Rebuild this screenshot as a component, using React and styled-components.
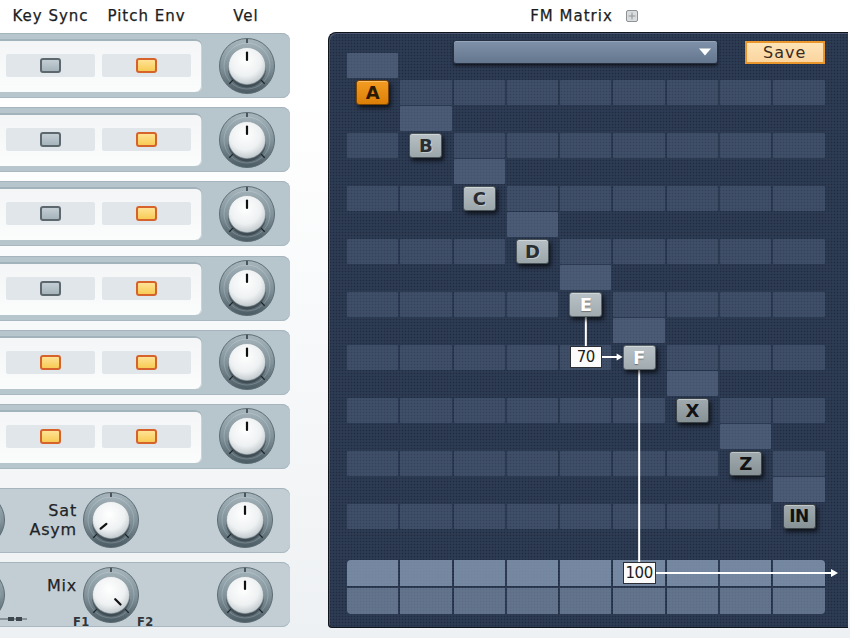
import React from "react";
import styled, { createGlobalStyle, css } from "styled-components";

const GlobalStyle = createGlobalStyle`
  html, body { margin: 0; padding: 0; }
  body {
    width: 850px;
    height: 638px;
    overflow: hidden;
    background: #f1f4f6;
    font-family: "DejaVu Sans", "Liberation Sans", sans-serif;
  }
`;

// matrix geometry (px)
const COL_W = 51.3;
const COL_GAP = 2;
const ROW_H = 25;
const ROW_GAP = 1.5;
const PITCH_X = COL_W + COL_GAP;
const PITCH_Y = ROW_H + ROW_GAP;
const PAD_X = 18;
const PAD_Y = 20;
const OUT_GAP = 31.5;
const OUT_TOP = PAD_Y + 17 * PITCH_Y + ROW_H + OUT_GAP;

const operators = [
  { label: "A", tone: "active" },
  { label: "B", tone: "light" },
  { label: "C", tone: "light" },
  { label: "D", tone: "light" },
  { label: "E", tone: "pale" },
  { label: "F", tone: "pale" },
  { label: "X", tone: "dark" },
  { label: "Z", tone: "dark" },
  { label: "IN", tone: "dark" },
];

const voices = [
  { sync: false, pitch: true },
  { sync: false, pitch: true },
  { sync: false, pitch: true },
  { sync: false, pitch: true },
  { sync: true, pitch: true },
  { sync: true, pitch: true },
];

const Page = styled.div`
  width: 850px;
  height: 638px;
  overflow: hidden;
  background: linear-gradient(#ffffff 0, #ffffff 90px, #eef1f3 100%);
`;

const Header = styled.div`
  height: 32px;
  display: flex;
  align-items: center;
  background: #fff;
`;

const LeftHeader = styled.div`
  width: 290px;
  display: flex;
  padding-left: 6px;
  box-sizing: border-box;
`;

const HeadLabel = styled.div`
  width: ${(p) => p.$w}px;
  margin-left: ${(p) => p.$ml || 0}px;
  text-align: center;
  font-size: 15px;
  letter-spacing: 1px;
  color: #1a1e22;
  white-space: nowrap;
  -webkit-text-stroke: 0.25px #1a1e22;
`;

const MatrixHeader = styled.div`
  margin-left: 38px;
  width: 520px;
  display: flex;
  justify-content: center;
  align-items: center;
  gap: 13px;
  padding-right: 8px;
  box-sizing: border-box;
`;

const Body = styled.div`
  display: flex;
  align-items: flex-start;
`;

const LeftColumn = styled.div`
  width: 290px;
  padding-top: 1px;
  display: flex;
  flex-direction: column;
  gap: 9.2px;
`;

const RowShell = styled.div`
  position: relative;
  margin-left: -10px;
  width: 300px;
  height: 65px;
  display: flex;
  align-items: center;
  border-radius: 0 8px 8px 0;
  background: ${(p) => (p.$plain ? "#c3ced4" : "#b7c5cd")};
  box-shadow: inset 0 1px 0 #a6b5bd, inset 0 -1px 0 #a9b8c0;
  ${(p) => p.$spaced && css`margin-top: 9.8px;`}
`;

const InnerPanel = styled.div`
  width: 212px;
  height: 53px;
  box-sizing: border-box;
  padding-left: 16px;
  display: flex;
  align-items: center;
  gap: 7px;
  background: linear-gradient(#f3f5f6, #fbfcfc);
  border-radius: 0 6px 6px 0;
  box-shadow: inset 0 2px 0 #a3b3bb, inset -1px 0 0 #c9d3d8;
`;

const SwitchCell = styled.div`
  width: 89px;
  height: 23px;
  border-radius: 2px;
  background: #e0e6e9;
  display: flex;
  align-items: center;
  justify-content: center;
`;

const Led = styled.div`
  width: 17px;
  height: 11px;
  border-radius: 3px;
  border: 2px solid ${(p) => (p.$on ? "#d6632b" : "#5c676e")};
  background: ${(p) =>
    p.$on
      ? "linear-gradient(#ffe394, #f7cb55)"
      : "linear-gradient(#c3ced4, #a6b4bb)"};
`;

const KnobSlot = styled.div`
  flex: 1;
  display: flex;
  justify-content: center;
  padding-left: 2px;
`;

const KnobWrap = styled.div`
  position: relative;
  width: 58px;
  height: 58px;
  flex: none;
  margin-left: ${(p) => p.$ml || 0}px;
`;

const Caption = styled.div`
  width: 71px;
  flex: none;
  text-align: right;
  font-size: 16px;
  line-height: 19px;
  letter-spacing: 0.8px;
  color: #1f2428;
  -webkit-text-stroke: 0.25px #1f2428;
  padding-bottom: ${(p) => p.$lift || 0}px;
`;

const KnobTag = styled.span`
  position: absolute;
  top: 49px;
  left: ${(p) => p.$x}px;
  font-size: 11.5px;
  font-weight: bold;
  color: #2e3438;
  letter-spacing: 0.5px;
`;

const EdgeMark = styled.svg`
  position: absolute;
  top: 50px;
  left: 50px;
`;

const Panel = styled.div`
  position: relative;
  margin-left: 38px;
  width: 520px;
  height: 596px;
  box-sizing: border-box;
  padding: ${PAD_Y}px 0 0 ${PAD_X}px;
  border: 1px solid #0f141d;
  border-right: none;
  border-radius: 8px 0 0 4px;
  background-color: #2d3b53;
  background-image: radial-gradient(circle, rgba(10, 16, 28, 0.35) 0.7px, transparent 1.1px);
  background-size: 3px 3px;
  box-shadow: inset 1px 1px 0 #4a5870;
`;

const Grid = styled.div`
  display: grid;
  grid-template-columns: repeat(9, ${COL_W}px);
  grid-template-rows: repeat(18, ${ROW_H}px);
  gap: ${ROW_GAP}px ${COL_GAP}px;
`;

const Slot = styled.div`
  grid-row: ${(p) => p.$row};
  grid-column: ${(p) => p.$col};
`;

const Cell = styled(Slot)`
  border-radius: 1px;
  background: ${(p) =>
    p.$feed ? "rgba(130, 150, 180, 0.36)" : "rgba(130, 150, 180, 0.22)"};
`;

const toneStyles = {
  active: css`
    background: linear-gradient(#f39c22, #dc7f08);
    color: #2b1904;
    border-color: #7a4300;
  `,
  light: css`
    background: linear-gradient(#b6c0c4, #9ba6ab);
    color: #2a2e31;
    text-shadow: 1px 1px 0 rgba(255, 255, 255, 0.35);
    border-color: #4b5459;
  `,
  pale: css`
    background: linear-gradient(#b9c2c6, #a1abb0);
    color: #ffffff;
    text-shadow: 0 1px 1px rgba(0, 0, 0, 0.35);
    border-color: #59636a;
  `,
  dark: css`
    background: linear-gradient(#a1abaf, #879296);
    color: #101214;
    border-color: #3c4448;
  `,
};

const OpButton = styled(Slot)`
  justify-self: center;
  width: 33px;
  box-sizing: border-box;
  border: 1px solid;
  border-radius: 3px;
  display: flex;
  align-items: center;
  justify-content: center;
  font-weight: bold;
  font-size: ${(p) => (p.children.length > 1 ? 17 : 18)}px;
  letter-spacing: ${(p) => (p.children.length > 1 ? -0.5 : 0)}px;
  box-shadow: 2px 3px 4px rgba(0, 0, 0, 0.65), inset 0 1px 0 rgba(255, 255, 255, 0.35);
  position: relative;
  z-index: 3;
  ${(p) => toneStyles[p.$tone]}
`;

const Toolbar = styled.div`
  grid-row: 1;
  grid-column: 3 / 10;
  margin-top: -13px;
  height: 24px;
  display: flex;
  align-items: center;
  justify-content: space-between;
  margin-left: -1px;
`;

const Dropdown = styled.div`
  width: 265px;
  height: 24px;
  box-sizing: border-box;
  border: 1px solid #263043;
  border-radius: 3px;
  background: linear-gradient(#7f92a9, #63768e);
  box-shadow: 0 2px 3px rgba(0, 0, 0, 0.55), inset 0 1px 0 #95a6bb;
  display: flex;
  align-items: center;
  justify-content: flex-end;
  padding-right: 5px;
`;

const SaveButton = styled.div`
  width: 80px;
  height: 23px;
  box-sizing: border-box;
  border: 2px solid #e9962c;
  background: linear-gradient(#fde3b6, #fbd59f);
  display: flex;
  align-items: center;
  justify-content: center;
  font-size: 16px;
  letter-spacing: 1px;
  color: #3a2c1f;
`;

const Amount = styled(Slot)`
  justify-self: center;
  align-self: center;
  width: ${(p) => p.$w}px;
  height: 22px;
  box-sizing: border-box;
  background: #fbfbfb;
  border: 1px solid #2b2f35;
  display: flex;
  align-items: center;
  justify-content: center;
  font-size: 15px;
  letter-spacing: -0.5px;
  color: #1b1d20;
  position: relative;
  z-index: 3;
`;

const Outputs = styled.div`
  margin-top: ${OUT_GAP}px;
  display: grid;
  grid-template-columns: repeat(9, ${COL_W}px);
  grid-template-rows: 26px 26px;
  gap: 2px ${COL_GAP}px;
`;

const cornerFor = (top, col) => {
  if (col === 1) return top ? "4px 0 0 0" : "0 0 0 4px";
  if (col === 9) return top ? "0 4px 0 0" : "0 0 4px 0";
  return "0";
};

const OutCell = styled(Slot)`
  background: ${(p) =>
    p.$top ? "rgba(140, 160, 186, 0.76)" : "rgba(140, 160, 186, 0.56)"};
  border-radius: ${(p) => cornerFor(p.$top, p.$col)};
`;

const WireLayer = styled.svg`
  position: absolute;
  top: 0;
  left: 0;
  z-index: 2;
  pointer-events: none;
  line {
    stroke: #ffffff;
    stroke-width: 2;
  }
  polygon {
    fill: #ffffff;
  }
`;

function Knob({ angle = 0 }) {
  const rad = (angle * Math.PI) / 180;
  const p = (r, a) => [29 + r * Math.sin(a), 29 - r * Math.cos(a)];
  const [ix1, iy1] = p(6, rad);
  const [ix2, iy2] = p(13.5, rad);
  const tl = (3 * Math.PI) / 4;
  const [a1, b1] = p(20, tl);
  const [a2, b2] = p(25, tl);
  const [c1, d1] = p(20, -tl);
  const [c2, d2] = p(25, -tl);
  return (
    <svg width="58" height="58" viewBox="0 0 58 58">
      <defs>
        <linearGradient id="ring" x1="0" y1="0" x2="0" y2="1">
          <stop offset="0" stopColor="#a7b6bd" />
          <stop offset="0.55" stopColor="#7e8f97" />
          <stop offset="1" stopColor="#4b5b63" />
        </linearGradient>
        <radialGradient id="cap" cx="0.45" cy="0.35" r="0.7">
          <stop offset="0" stopColor="#ffffff" />
          <stop offset="0.6" stopColor="#eef1f2" />
          <stop offset="1" stopColor="#b9c2c6" />
        </radialGradient>
      </defs>
      <circle cx="29" cy="29" r="27.5" fill="url(#ring)" stroke="#5d6c73" strokeWidth="1" />
      <circle cx="29" cy="29" r="23" fill="none" stroke="rgba(255,255,255,0.18)" strokeWidth="1" />
      <line x1="29" y1="2" x2="29" y2="6" stroke="#1d2326" strokeWidth="1.3" />
      <line x1={a1} y1={b1} x2={a2} y2={b2} stroke="#1d2326" strokeWidth="1.3" />
      <line x1={c1} y1={d1} x2={c2} y2={d2} stroke="#1d2326" strokeWidth="1.3" />
      <circle cx="29" cy="31.5" r="19" fill="rgba(30,40,46,0.45)" />
      <circle cx="29" cy="29" r="18.5" fill="url(#cap)" stroke="#8a979d" strokeWidth="0.6" />
      <line x1={ix1} y1={iy1} x2={ix2} y2={iy2} stroke="#111" strokeWidth="2.2" strokeLinecap="round" />
    </svg>
  );
}

function GridIcon() {
  return (
    <svg width="12" height="12" viewBox="0 0 12 12">
      <rect x="0.5" y="0.5" width="11" height="11" rx="1.5" fill="#d9dcde" stroke="#8d9296" />
      <line x1="6" y1="2.5" x2="6" y2="9.5" stroke="#8d9296" />
      <line x1="2.5" y1="6" x2="9.5" y2="6" stroke="#8d9296" />
    </svg>
  );
}

function VoiceRow({ sync, pitch }) {
  return (
    <RowShell>
      <InnerPanel>
        <SwitchCell>
          <Led $on={sync} />
        </SwitchCell>
        <SwitchCell>
          <Led $on={pitch} />
        </SwitchCell>
      </InnerPanel>
      <KnobSlot>
        <Knob />
      </KnobSlot>
    </RowShell>
  );
}

function Wires() {
  const cx = (c) => PAD_X + c * PITCH_X + COL_W / 2;
  const top = (r) => PAD_Y + r * PITCH_Y;
  const ex = cx(4);
  const fx = cx(5);
  const fMid = top(11) + ROW_H / 2;
  const outMid = OUT_TOP + 13;
  const fLeft = fx - 16.5;
  return (
    <WireLayer width="520" height="594">
      <line x1={ex} y1={top(9) + ROW_H} x2={ex} y2={top(11) + 2} />
      <line x1={ex + 16} y1={fMid} x2={fLeft - 5} y2={fMid} />
      <polygon points={`${fLeft},${fMid} ${fLeft - 6},${fMid - 3.5} ${fLeft - 6},${fMid + 3.5}`} />
      <line x1={fx} y1={top(11) + ROW_H} x2={fx} y2={OUT_TOP + 2} />
      <line x1={fx + 16.5} y1={outMid} x2={503} y2={outMid} />
      <polygon points={`509,${outMid} 502,${outMid - 4} 502,${outMid + 4}`} />
    </WireLayer>
  );
}

function Matrix() {
  const items = [];
  for (let r = 0; r < 18; r++) {
    const k = Math.floor(r / 2);
    for (let c = 0; c < 9; c++) {
      if (r % 2 === 0) {
        if (c === k) items.push(<Cell key={`f${r}-${c}`} $row={r + 1} $col={c + 1} $feed />);
      } else if (c === k) {
        items.push(
          <OpButton key={`o${r}`} $row={r + 1} $col={c + 1} $tone={operators[k].tone}>
            {operators[k].label}
          </OpButton>
        );
      } else {
        items.push(<Cell key={`c${r}-${c}`} $row={r + 1} $col={c + 1} />);
      }
    }
  }
  return (
    <Panel>
      <Grid>
        {items}
        <Toolbar>
          <Dropdown>
            <svg width="14" height="8" viewBox="0 0 14 8">
              <polygon points="1,0.5 13,0.5 7,7.5" fill="#ffffff" />
            </svg>
          </Dropdown>
          <SaveButton>Save</SaveButton>
        </Toolbar>
        <Amount $row={12} $col={5} $w={32}>70</Amount>
      </Grid>
      <Outputs>
        {Array.from({ length: 9 }, (_, c) => (
          <OutCell key={`t${c}`} $row={1} $col={c + 1} $top />
        ))}
        {Array.from({ length: 9 }, (_, c) => (
          <OutCell key={`b${c}`} $row={2} $col={c + 1} />
        ))}
        <Amount $row={1} $col={6} $w={33}>100</Amount>
      </Outputs>
      <Wires />
    </Panel>
  );
}

export default function App() {
  return (
    <Page>
      <GlobalStyle />
      <Header>
        <LeftHeader>
          <HeadLabel $w={89}>Key Sync</HeadLabel>
          <HeadLabel $w={89} $ml={7}>Pitch Env</HeadLabel>
          <HeadLabel $w={88} $ml={11}>Vel</HeadLabel>
        </LeftHeader>
        <MatrixHeader>
          <HeadLabel as="span">FM Matrix</HeadLabel>
          <GridIcon />
        </MatrixHeader>
      </Header>
      <Body>
        <LeftColumn>
          {voices.map((v, i) => (
            <VoiceRow key={i} {...v} />
          ))}
          <RowShell $plain $spaced>
            <KnobWrap $ml={-42}>
              <Knob />
            </KnobWrap>
            <Caption>
              Sat
              <br />
              Asym
            </Caption>
            <KnobWrap $ml={5}>
              <Knob angle={-130} />
            </KnobWrap>
            <KnobWrap $ml={76}>
              <Knob />
            </KnobWrap>
          </RowShell>
          <RowShell $plain>
            <KnobWrap $ml={-42}>
              <Knob />
              <EdgeMark width="30" height="6" viewBox="0 0 30 6">
                <line x1="0" y1="3" x2="29" y2="3" stroke="#4d565c" strokeWidth="1" />
                <rect x="10" y="1" width="6" height="4" fill="#3d464c" />
                <rect x="18" y="1" width="6" height="4" fill="#3d464c" />
              </EdgeMark>
            </KnobWrap>
            <Caption $lift={18}>Mix</Caption>
            <KnobWrap $ml={5}>
              <Knob angle={135} />
              <KnobTag $x={-9}>F1</KnobTag>
              <KnobTag $x={55}>F2</KnobTag>
            </KnobWrap>
            <KnobWrap $ml={76}>
              <Knob />
            </KnobWrap>
          </RowShell>
        </LeftColumn>
        <Matrix />
      </Body>
    </Page>
  );
}
